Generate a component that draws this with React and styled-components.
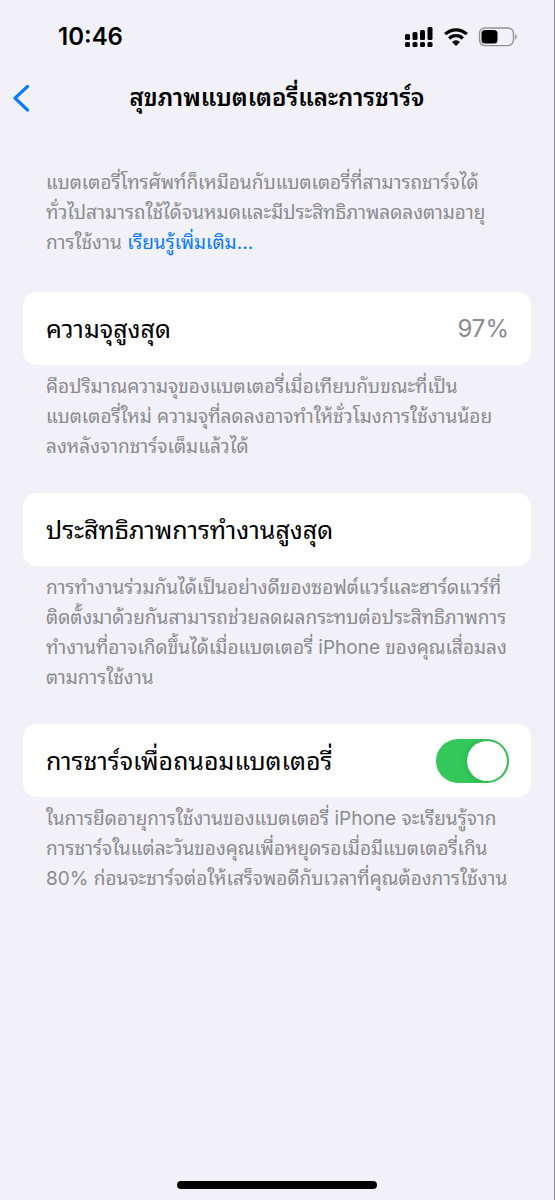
import React, { useState } from "react";
import styled, { createGlobalStyle } from "styled-components";

const GlobalStyle = createGlobalStyle`
  * {
    box-sizing: border-box;
  }
  body {
    margin: 0;
    background-color: #f2f1f7;
    font-family: Inter, "Noto Sans Thai Looped", "Noto Looped Thai", "Noto Looped Thai UI", "IBM Plex Sans Thai Looped", Sarabun, Thonburi, Loma, Garuda, Laksaman, Umpush, Waree, "Noto Sans Thai", "Noto Sans", sans-serif;
    color: #000000;
  }
`;

const Screen = styled.div`
  min-height: 100vh;
  display: flex;
  flex-direction: column;
  background-color: #f2f1f7;
  border-right: 1px solid #8e8e92;
`;

const StatusBar = styled.div`
  height: 74px;
  padding: 0 36px 0 58px;
  display: flex;
  align-items: center;
  justify-content: space-between;
`;

const Clock = styled.time`
  font-size: 24px;
  font-weight: 600;
  line-height: 30px;
`;

const StatusIcons = styled.div`
  display: flex;
  align-items: center;
  gap: 10px;
`;

const NavBar = styled.header`
  height: 48px;
  padding: 0 12px;
  display: grid;
  grid-template-columns: 32px 1fr 32px;
  align-items: center;
`;

const BackButton = styled.button`
  height: 32px;
  padding: 0;
  border: none;
  background: none;
  color: #0a7aff;
  display: flex;
  align-items: center;
  cursor: pointer;
`;

const Title = styled.h1`
  margin: 0;
  font-size: 24px;
  font-weight: 600;
  line-height: 32px;
  text-align: center;
  white-space: nowrap;
`;

const Content = styled.main`
  flex: 1;
  padding: 39px 23px 0;
`;

const Section = styled.section`
  margin-bottom: ${({ $intro }) => ($intro ? "34px" : "31px")};
`;

const Note = styled.p`
  margin: 0;
  padding: 7px 0 0 23px;
  font-size: 19px;
  line-height: 30px;
  color: #8a8a8f;
  white-space: nowrap;
`;

const MoreLink = styled.a`
  color: #0a7aff;
  text-decoration: none;
`;

const Card = styled.div`
  min-height: 73px;
  padding: 0 22px 0 23px;
  border-radius: 14px;
  background-color: #ffffff;
  display: flex;
  align-items: center;
  justify-content: space-between;
`;

const CardLabel = styled.label`
  font-size: 25px;
  font-weight: 400;
  line-height: 32px;
  white-space: nowrap;
`;

const CardValue = styled.span`
  font-size: 24px;
  line-height: 32px;
  color: #8a8a8f;
`;

const Switch = styled.input`
  appearance: none;
  width: 73px;
  height: 44px;
  margin: 0;
  padding: 2px;
  border-radius: 22px;
  background-color: ${({ checked }) => (checked ? "#34c759" : "#e9e9eb")};
  display: flex;
  justify-content: ${({ checked }) => (checked ? "flex-end" : "flex-start")};
  cursor: pointer;
  &::before {
    content: "";
    width: 40px;
    height: 40px;
    border-radius: 50%;
    background-color: #ffffff;
    box-shadow: 0 0 6px rgba(0, 0, 0, 0.15);
  }
`;

const HomeBar = styled.footer`
  padding-bottom: 11px;
  display: flex;
  justify-content: center;
`;

const HomeIndicator = styled.div`
  width: 36%;
  height: 8px;
  border-radius: 4px;
  background-color: #000000;
`;

const SignalIcon = () => (
  <svg width="30" height="20" viewBox="0 0 30 20" aria-hidden="true">
    <rect x="1" y="7" width="5" height="6" rx="1.5" />
    <rect x="8.5" y="5" width="5" height="8" rx="1.5" />
    <rect x="16" y="3" width="5" height="10" rx="1.5" />
    <rect x="23.5" y="0" width="5" height="13" rx="1.5" />
    <rect x="1" y="15" width="5" height="5" rx="1.5" />
    <rect x="8.5" y="15" width="5" height="5" rx="1.5" />
    <rect x="16" y="15" width="5" height="5" rx="1.5" />
    <rect x="23.5" y="15" width="5" height="5" rx="1.5" />
  </svg>
);

const WifiIcon = () => (
  <svg width="24" height="18" viewBox="0 0 24 18" aria-hidden="true">
    <g fill="none" stroke="#000000" strokeWidth="3.2">
      <path d="M1.2 6.2A15.4 15.4 0 0 1 22.8 6.2" />
      <path d="M5.2 10.5A9.7 9.7 0 0 1 18.8 10.5" />
    </g>
    <path d="M12 18L8 13.9A5.8 5.8 0 0 1 16 13.9Z" />
  </svg>
);

const BatteryIcon = () => (
  <svg width="40" height="20" viewBox="0 0 40 20" aria-hidden="true">
    <rect x="1.5" y="1" width="34" height="17.6" rx="5.5" fill="none" stroke="#929297" strokeWidth="1.4" />
    <rect x="3.5" y="3" width="16" height="13.6" rx="3.5" />
    <path d="M37.2 7C39.2 7.7 39.2 12 37.2 12.7Z" fill="#929297" />
  </svg>
);

const BackIcon = () => (
  <svg width="18" height="28" viewBox="0 0 18 28" fill="none" aria-hidden="true">
    <path d="M15.5 2.5L3 14.2L15.5 26" stroke="currentColor" strokeWidth="3.2" strokeLinecap="round" strokeLinejoin="round" />
  </svg>
);

const App = () => {
  const [optimized, setOptimized] = useState(true);

  return (
    <>
      <GlobalStyle />
      <Screen lang="th">
        <StatusBar>
          <Clock>10:46</Clock>
          <StatusIcons>
            <SignalIcon />
            <WifiIcon />
            <BatteryIcon />
          </StatusIcons>
        </StatusBar>
        <NavBar>
          <BackButton type="button" aria-label="กลับ">
            <BackIcon />
          </BackButton>
          <Title>สุขภาพแบตเตอรี่และการชาร์จ</Title>
        </NavBar>
        <Content>
          <Section $intro>
            <Note>
              แบตเตอรี่โทรศัพท์ก็เหมือนกับแบตเตอรี่ที่สามารถชาร์จได้
              <br />
              ทั่วไปสามารถใช้ได้จนหมดและมีประสิทธิภาพลดลงตามอายุ
              <br />
              การใช้งาน <MoreLink href="#more">เรียนรู้เพิ่มเติม...</MoreLink>
            </Note>
          </Section>
          <Section>
            <Card>
              <CardLabel as="span">ความจุสูงสุด</CardLabel>
              <CardValue>97%</CardValue>
            </Card>
            <Note>
              คือปริมาณความจุของแบตเตอรี่เมื่อเทียบกับขณะที่เป็น
              <br />
              แบตเตอรี่ใหม่ ความจุที่ลดลงอาจทำให้ชั่วโมงการใช้งานน้อย
              <br />
              ลงหลังจากชาร์จเต็มแล้วได้
            </Note>
          </Section>
          <Section>
            <Card>
              <CardLabel as="span">ประสิทธิภาพการทำงานสูงสุด</CardLabel>
            </Card>
            <Note>
              การทำงานร่วมกันได้เป็นอย่างดีของซอฟต์แวร์และฮาร์ดแวร์ที่
              <br />
              ติดตั้งมาด้วยกันสามารถช่วยลดผลกระทบต่อประสิทธิภาพการ
              <br />
              ทำงานที่อาจเกิดขึ้นได้เมื่อแบตเตอรี่ iPhone ของคุณเสื่อมลง
              <br />
              ตามการใช้งาน
            </Note>
          </Section>
          <Section>
            <Card>
              <CardLabel htmlFor="optimized">การชาร์จเพื่อถนอมแบตเตอรี่</CardLabel>
              <Switch
                id="optimized"
                type="checkbox"
                role="switch"
                checked={optimized}
                onChange={(e) => setOptimized(e.target.checked)}
              />
            </Card>
            <Note>
              ในการยืดอายุการใช้งานของแบตเตอรี่ iPhone จะเรียนรู้จาก
              <br />
              การชาร์จในแต่ละวันของคุณเพื่อหยุดรอเมื่อมีแบตเตอรี่เกิน
              <br />
              80% ก่อนจะชาร์จต่อให้เสร็จพอดีกับเวลาที่คุณต้องการใช้งาน
            </Note>
          </Section>
        </Content>
        <HomeBar>
          <HomeIndicator />
        </HomeBar>
      </Screen>
    </>
  );
};

export default App;
